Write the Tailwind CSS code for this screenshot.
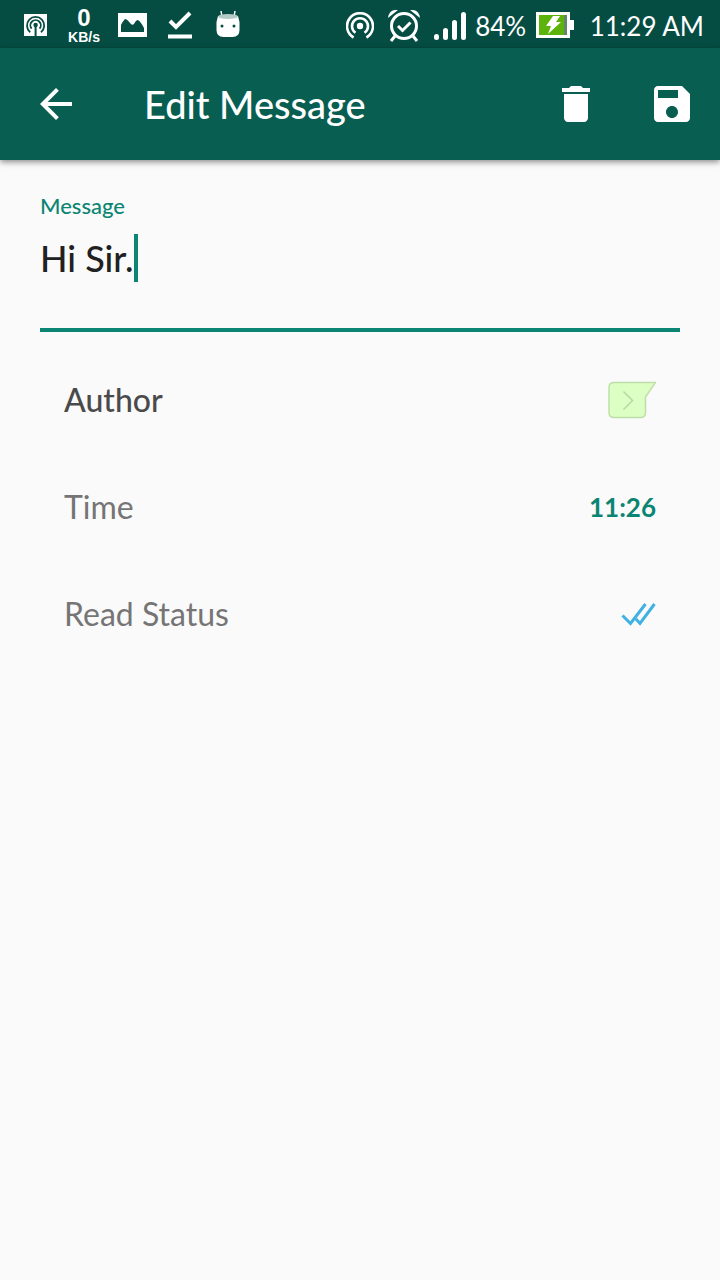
<!DOCTYPE html>
<html lang="en">
<head>
  <meta charset="UTF-8" />
  <meta name="viewport" content="width=device-width, initial-scale=1.0" />
  <title>Edit Message</title>
  <script src="https://cdn.jsdelivr.net/npm/@tailwindcss/browser@4"></script>
</head>
<body class="min-h-screen bg-[#fafafa] font-['Lato',sans-serif]">

  <!-- Status bar -->
  <div class="flex h-12 items-center justify-between bg-[#054d42] pt-0.5 pl-6 pr-4 text-white">
    <div class="flex items-center">
      <svg class="h-6 w-6" viewBox="0 0 24 24" fill="none">
        <path fill="#fff" d="M0 1h23v22H0z" />
        <g stroke="#054d42" stroke-width="1.8">
          <path d="M6.2 19.2a8.6 8.6 0 1 1 10.8 0" />
          <path d="M7.6 15.6a5.2 5.2 0 1 1 8 0" />
          <path d="M11.6 12v11" stroke-width="2" />
        </g>
        <circle cx="11.6" cy="12" r="2.2" fill="#054d42" />
      </svg>
      <div class="ml-[18px] flex w-9 flex-col items-center font-['Liberation_Sans',sans-serif] font-bold">
        <span class="text-2xl leading-6">0</span>
        <span class="text-sm leading-[14px]">KB/s</span>
      </div>
      <svg class="ml-4 h-6 w-[29px]" viewBox="0 0 29 24" fill="#fff" fill-rule="evenodd">
        <path d="M0 0h29v24H0zM3 19h23v-4q-3-6-6-8-2 0-4 4-2 2-4-1-3-4-5-4-2 2-4 6z" />
      </svg>
      <svg class="ml-[21px] h-7 w-6" viewBox="0 0 24 28" fill="none" stroke="#fff" stroke-width="4">
        <path d="M2 10l6 6L22 2M0 25.500h24" />
      </svg>
      <svg class="ml-6 h-7 w-6" viewBox="0 0 24 28">
        <path d="M6 6L5 0M18 6l1-6" stroke="#fff" stroke-width="1.500" />
        <path fill="#fff" d="M2 5h20l1.500 6v8q0 7-7 7h-9q-7 0-7-7v-8z" />
        <ellipse cx="12" cy="5.500" rx="10" ry="2.500" fill="#b4cbc7" />
        <circle cx="6" cy="15" r="1.500" fill="#054d42" />
        <circle cx="18" cy="15" r="1.500" fill="#054d42" />
      </svg>
    </div>

    <div class="flex items-center pt-0.5">
      <svg class="h-7 w-7" viewBox="0 0 28 28" fill="none" stroke="#fff" stroke-width="2.600">
        <circle cx="14" cy="14" r="3.200" fill="#fff" stroke="none" />
        <path d="M7.600 25.500a13 13 0 1 1 12.800 0" />
        <path d="M9.500 20.800a8 8 0 1 1 9 0" />
      </svg>
      <svg class="ml-3 h-8 w-9" viewBox="0 0 36 32" fill="none" stroke="#fff" stroke-width="3">
        <circle cx="18" cy="16" r="12.500" />
        <path d="M12 16l4.500 4.500 8-8M9 26l-4 5M27 26l4 5" />
        <path d="M2 8q1-9 10-8zM34 8q-1-9-10-8z" fill="#fff" stroke="none" />
      </svg>
      <div class="ml-3 flex h-7 items-end gap-1">
        <span class="h-[6px] w-[5px] rounded-sm bg-white"></span>
        <span class="h-3 w-[5px] rounded-sm bg-white"></span>
        <span class="h-5 w-[5px] rounded-sm bg-white"></span>
        <span class="h-7 w-[5px] rounded-sm bg-white"></span>
      </div>
      <span class="ml-2 w-[54px] text-center text-[26px] leading-8">84%</span>
      <svg class="ml-2 h-7 w-[38px]" viewBox="0 0 38 28">
        <path fill="#fff" d="M0 0h34v8h4v10h-4v8H0z" />
        <path fill="#5bb30b" d="M3 3h25v20H3z" />
        <path fill="#63866a" d="M28 3h3v20h-3z" />
        <path fill="#fff" d="M17 4h7l-4 6h5L12 22l3-8h-5z" />
      </svg>
      <span class="ml-4 text-[26px] leading-8">11:29 AM</span>
    </div>
  </div>

  <!-- App bar -->
  <header class="flex h-28 items-center bg-[#075e51] px-6 pl-8 text-white shadow-[0_2px_6px_rgba(0,0,0,0.45)]">
    <button type="button" aria-label="Back">
      <svg class="h-12 w-12" viewBox="0 0 24 24" fill="currentColor">
        <path d="M20 11H7.830l5.590-5.590L12 4l-8 8 8 8 1.410-1.410L7.830 13H20v-2z" />
      </svg>
    </button>
    <h1 class="ml-16 flex-1 text-[38px] leading-[48px] font-medium">Edit Message</h1>
    <button type="button" aria-label="Delete">
      <svg class="h-12 w-12" viewBox="0 0 24 24" fill="currentColor">
        <path d="M6 19c0 1.100.9 2 2 2h8c1.100 0 2-.9 2-2V7H6v12zM19 4h-3.500l-1-1h-5l-1 1H5v2h14V4z" />
      </svg>
    </button>
    <button type="button" aria-label="Save" class="ml-12">
      <svg class="h-12 w-12" viewBox="0 0 24 24" fill="currentColor">
        <path d="M17 3H5c-1.110 0-2 .9-2 2v14c0 1.100.89 2 2 2h14c1.100 0 2-.9 2-2V7l-4-4zm-5 16c-1.660 0-3-1.340-3-3s1.340-3 3-3 3 1.340 3 3-1.340 3-3 3zm3-10H5V5h10v4z" />
      </svg>
    </button>
  </header>

  <main class="px-10 pt-8">
    <div class="border-b-4 border-[#0b8573] pb-11">
      <label for="message" class="block text-[22px] leading-7 font-medium text-[#0b8573]">Message</label>
      <div class="mt-3 flex h-[52px] items-center">
        <input id="message" type="text" value="Hi Sir." class="field-sizing-content text-[36px] leading-[48px] font-medium text-[#212121] outline-none" />
        <span class="h-12 w-1 bg-[#0b8573]"></span>
      </div>
    </div>

    <div class="px-6 pt-3.5 text-[32px] leading-10">
      <div class="flex h-[107px] items-center justify-between">
        <span class="font-medium text-[#4a4a4a]">Author</span>
        <button type="button" aria-label="Change author">
          <svg class="h-[38px] w-12" viewBox="0 0 48 38" fill="none" stroke-width="1.500">
            <path fill="#dcffc3" stroke="#bfdfaa" d="M6 1.500h41.500L37.500 16v15.500q0 5-5 5H6q-5 0-5-5v-25q0-5 5-5z" />
            <path stroke="#b9d9a4" d="M15.500 10.500l9 9-9 9" />
          </svg>
        </button>
      </div>
      <div class="flex h-[107px] items-center justify-between text-[#757575]">
        <span>Time</span>
        <button type="button" class="text-[26px] font-bold text-[#0b8573]">11:26</button>
      </div>
      <div class="flex h-[107px] items-center justify-between text-[#757575]">
        <span>Read Status</span>
        <button type="button" aria-label="Read">
          <svg class="h-6 w-[35px]" viewBox="0 0 35 24" fill="none" stroke="#3fb1e3" stroke-width="3">
            <path d="M1.500 13.500l8 8L24.500 2M15 17l4 4.500L33.500 2" />
          </svg>
        </button>
      </div>
    </div>
  </main>

</body>
</html>
